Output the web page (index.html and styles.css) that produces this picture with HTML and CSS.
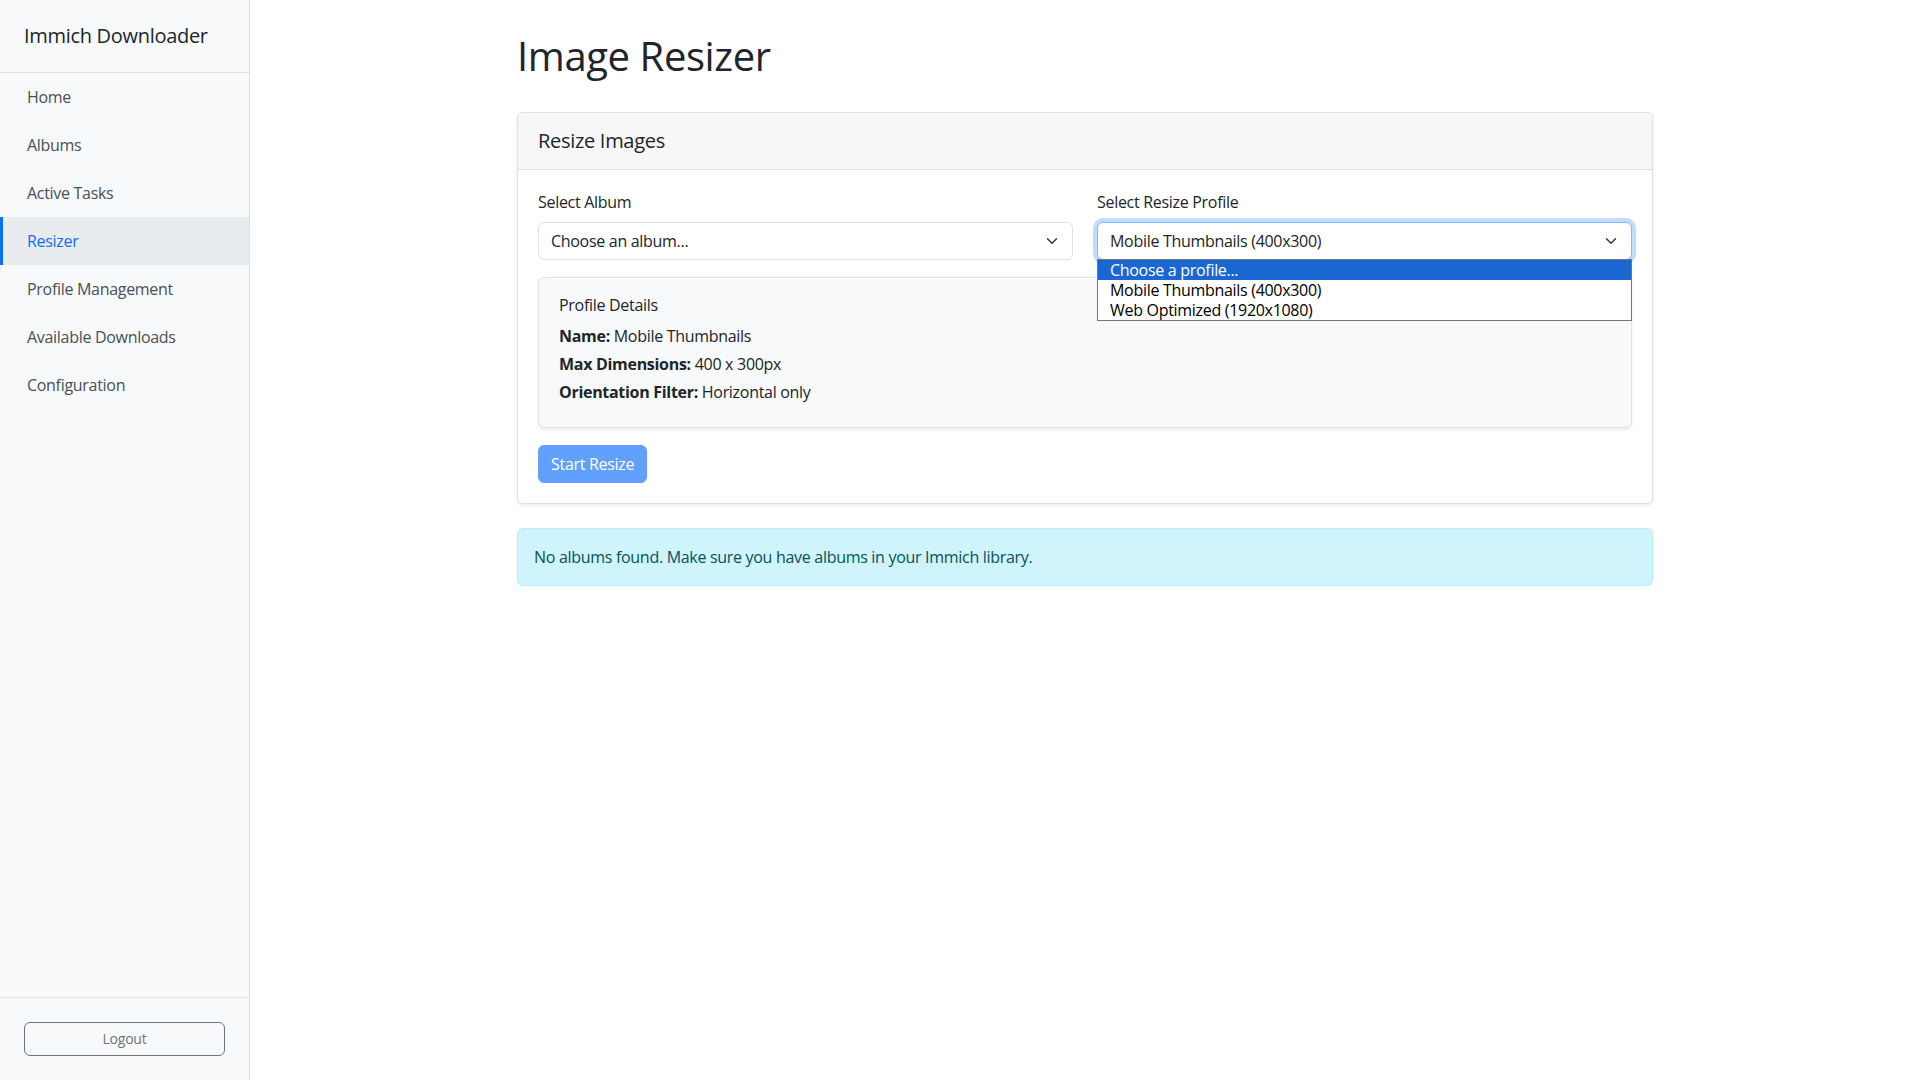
FILE: index.html
```html
<!DOCTYPE html>
<html lang="en">
<head>
<meta charset="utf-8">
<title>Image Resizer - Immich Downloader</title>
<link rel="stylesheet" href="styles.css">
</head>
<body>
<div class="layout">
  <aside class="sidebar">
    <div class="brand">Immich Downloader</div>
    <nav class="nav">
      <a class="nav-link" href="#">Home</a>
      <a class="nav-link" href="#">Albums</a>
      <a class="nav-link" href="#">Active Tasks</a>
      <a class="nav-link active" href="#">Resizer</a>
      <a class="nav-link" href="#">Profile Management</a>
      <a class="nav-link" href="#">Available Downloads</a>
      <a class="nav-link" href="#">Configuration</a>
    </nav>
    <div class="sidebar-footer">
      <button class="btn-logout" type="button">Logout</button>
    </div>
  </aside>
  <main class="main">
    <div class="container">
      <h1 class="page-title">Image Resizer</h1>
      <div class="card">
        <div class="card-header"><h5 class="card-title">Resize Images</h5></div>
        <div class="card-body">
          <div class="form-row">
            <div class="field">
              <label class="form-label">Select Album</label>
              <div class="select">
                <span class="select-text">Choose an album...</span>
                <svg class="chevron" viewBox="0 0 16 16" width="16" height="12"><path d="M2 5l6 6 6-6" fill="none" stroke="#343a40" stroke-width="2" stroke-linecap="round" stroke-linejoin="round"/></svg>
              </div>
            </div>
            <div class="field">
              <label class="form-label">Select Resize Profile</label>
              <div class="select-wrap">
                <div class="select focused">
                  <span class="select-text">Mobile Thumbnails (400x300)</span>
                  <svg class="chevron" viewBox="0 0 16 16" width="16" height="12"><path d="M2 5l6 6 6-6" fill="none" stroke="#343a40" stroke-width="2" stroke-linecap="round" stroke-linejoin="round"/></svg>
                </div>
                <ul class="dropdown">
                  <li class="option selected">Choose a profile...</li>
                  <li class="option">Mobile Thumbnails (400x300)</li>
                  <li class="option">Web Optimized (1920x1080)</li>
                </ul>
              </div>
            </div>
          </div>
          <div class="profile-details">
            <h6 class="details-title">Profile Details</h6>
            <p class="detail"><strong>Name:</strong> Mobile Thumbnails</p>
            <p class="detail"><strong>Max Dimensions:</strong> 400 x 300px</p>
            <p class="detail"><strong>Orientation Filter:</strong> Horizontal only</p>
          </div>
          <button class="btn-primary" type="button" disabled>Start Resize</button>
        </div>
      </div>
      <div class="alert">No albums found. Make sure you have albums in your Immich library.</div>
    </div>
  </main>
</div>
</body>
</html>
```
FILE: styles.css
```css
* { box-sizing: border-box; }
html, body { margin: 0; padding: 0; }
body {
  font-family: "Open Sans", "Noto Sans", sans-serif;
  font-size: 16px;
  line-height: 24px;
  letter-spacing: -0.3px;
  color: #212529;
  background: #fff;
}
.layout {
  display: flex;
  min-height: 100vh;
}
.sidebar {
  width: 250px;
  flex: 0 0 250px;
  height: 100vh;
  background: #f8f9fa;
  border-right: 1px solid #dee2e6;
  display: flex;
  flex-direction: column;
}
.brand {
  padding: 24px 24px;
  font-size: 20px;
  line-height: 24px;
  font-weight: 500;
  letter-spacing: -0.3px;
  color: #212529;
  border-bottom: 1px solid #dee2e6;
}
.nav {
  display: flex;
  flex-direction: column;
}
.nav-link {
  display: block;
  padding: 12px 24px;
  border-left: 3px solid transparent;
  color: #495057;
  text-decoration: none;
  font-size: 16px;
  line-height: 24px;
}
.nav-link.active {
  background: #e9ecef;
  color: #0d6efd;
  border-left-color: #0d6efd;
}
.sidebar-footer {
  margin-top: auto;
  padding: 24px;
  border-top: 1px solid #dee2e6;
}
.btn-logout {
  display: block;
  width: 100%;
  padding: 6px 8px;
  font-family: inherit;
  font-size: 14px;
  line-height: 20px;
  letter-spacing: -0.2px;
  color: #6c757d;
  background: transparent;
  border: 1px solid #6c757d;
  border-radius: 6px;
}
.main {
  flex: 1;
  padding-top: 32px;
}
.container {
  width: 1136px;
  margin: 0 auto;
}
.page-title {
  margin: 0 0 32px;
  font-size: 40px;
  line-height: 48px;
  font-weight: 500;
  letter-spacing: -0.4px;
}
.card {
  border: 1px solid #dee2e6;
  border-radius: 6px;
  background: #fff;
  box-shadow: 0 2px 4px rgba(0,0,0,.075);
}
.card-header {
  padding: 16px 20px;
  background: #f7f7f8;
  border-bottom: 1px solid #dee2e6;
  border-radius: 6px 6px 0 0;
}
.card-title {
  margin: 0;
  font-size: 20px;
  line-height: 24px;
  font-weight: 500;
}
.card-body {
  padding: 20px;
}
.form-row {
  display: grid;
  grid-template-columns: 1fr 1fr;
  column-gap: 24px;
  margin-bottom: 17px;
}
.form-label {
  display: block;
  margin-bottom: 8px;
  font-weight: 500;
}
.select-wrap { position: relative; }
.select {
  position: relative;
  height: 38px;
  padding: 6px 36px 6px 12px;
  border: 1px solid #dee2e6;
  border-radius: 6px;
  background: #fff;
  color: #212529;
}
.select.focused {
  border-color: #86b7fe;
  box-shadow: 0 0 0 4px rgba(13,110,253,.25);
}
.chevron {
  position: absolute;
  right: 12px;
  top: 12px;
}
.dropdown {
  position: absolute;
  left: 0;
  right: 0;
  top: calc(100% - 1px);
  margin: 0;
  padding: 0;
  list-style: none;
  background: #fff;
  border: 1px solid #767676;
  z-index: 5;
}
.option {
  padding: 0 12px;
  font-size: 16px;
  line-height: 20px;
  color: #000;
}
.option.selected {
  background: #1a66d3;
  color: #fff;
}
.profile-details {
  padding: 17px 20px 19px;
  background: #f8f9fa;
  border: 1px solid #dee2e6;
  border-radius: 6px;
  box-shadow: 0 2px 4px rgba(0,0,0,.075);
}
.details-title {
  margin: 0 0 9px;
  font-size: 16px;
  line-height: 20px;
  font-weight: 500;
}
.detail {
  margin: 0 0 4px;
}
.detail strong { font-weight: 700; }
.btn-primary {
  display: inline-block;
  margin-top: 17px;
  padding: 6px 12px;
  font-family: inherit;
  font-size: 16px;
  line-height: 24px;
  letter-spacing: -0.3px;
  color: #fff;
  background: #0d6efd;
  border: 1px solid #0d6efd;
  border-radius: 6px;
}
.btn-primary:disabled { opacity: .65; }
.alert {
  margin-top: 24px;
  padding: 16px;
  background: #cff4fc;
  border: 1px solid #b6effb;
  border-radius: 6px;
  color: #055160;
}
```
